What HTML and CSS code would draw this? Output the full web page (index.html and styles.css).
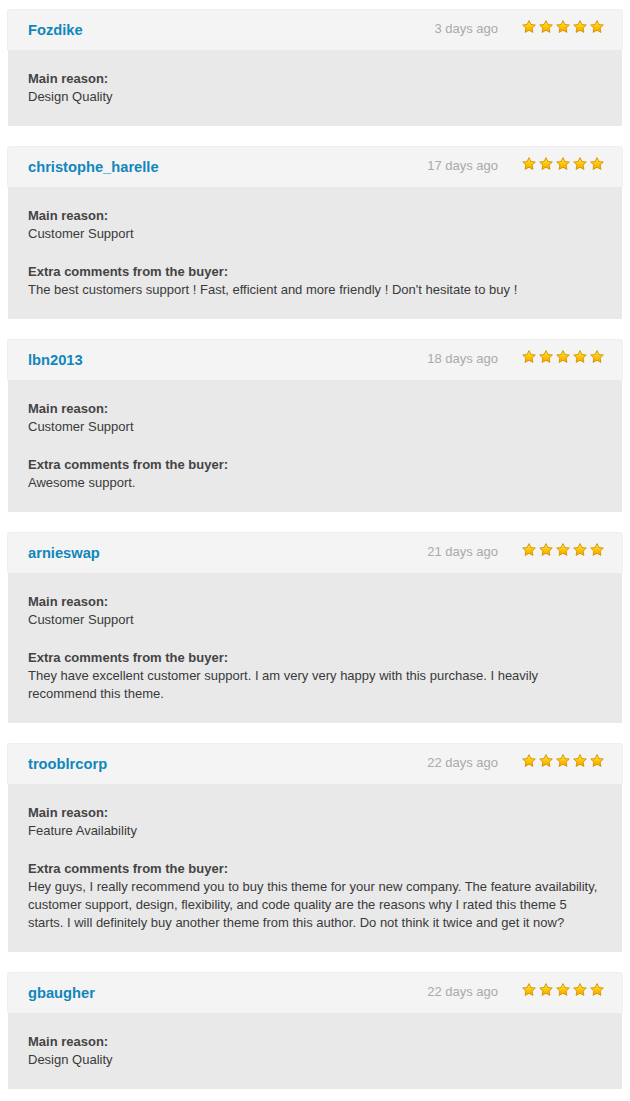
FILE: index.html
```html
<!DOCTYPE html>
<html>
<head>
<meta charset="utf-8">
<link rel="stylesheet" href="styles.css">
</head>
<body>
<svg width="0" height="0" class="defs">
  <defs>
    <linearGradient id="sg" x1="0" y1="0" x2="0" y2="1">
      <stop offset="0" stop-color="#ffe45c"/>
      <stop offset="0.55" stop-color="#ffc400"/>
      <stop offset="1" stop-color="#f7a600"/>
    </linearGradient>
    <symbol id="star" viewBox="0 0 14 13">
      <polygon points="7,0.6 8.9,4.5 13.3,5 10.1,8 10.9,12.4 7,10.2 3.1,12.4 3.9,8 0.7,5 5.1,4.5" fill="url(#sg)" stroke="#d39200" stroke-width="0.9" stroke-linejoin="round"/>
    </symbol>
  </defs>
</svg>
<div class="reviews">

  <div class="review">
    <div class="review-head">
      <span class="user">Fozdike</span>
      <span class="date">3 days ago</span>
      <span class="stars"><svg><use href="#star"/></svg><svg><use href="#star"/></svg><svg><use href="#star"/></svg><svg><use href="#star"/></svg><svg><use href="#star"/></svg></span>
    </div>
    <div class="review-body">
      <div class="label">Main reason:</div>
      <div class="text">Design Quality</div>
    </div>
  </div>

  <div class="review">
    <div class="review-head">
      <span class="user">christophe_harelle</span>
      <span class="date">17 days ago</span>
      <span class="stars"><svg><use href="#star"/></svg><svg><use href="#star"/></svg><svg><use href="#star"/></svg><svg><use href="#star"/></svg><svg><use href="#star"/></svg></span>
    </div>
    <div class="review-body">
      <div class="label">Main reason:</div>
      <div class="text">Customer Support</div>
      <div class="label extra">Extra comments from the buyer:</div>
      <div class="text">The best customers support ! Fast, efficient and more friendly ! Don't hesitate to buy !</div>
    </div>
  </div>

  <div class="review">
    <div class="review-head">
      <span class="user">lbn2013</span>
      <span class="date">18 days ago</span>
      <span class="stars"><svg><use href="#star"/></svg><svg><use href="#star"/></svg><svg><use href="#star"/></svg><svg><use href="#star"/></svg><svg><use href="#star"/></svg></span>
    </div>
    <div class="review-body">
      <div class="label">Main reason:</div>
      <div class="text">Customer Support</div>
      <div class="label extra">Extra comments from the buyer:</div>
      <div class="text">Awesome support.</div>
    </div>
  </div>

  <div class="review">
    <div class="review-head">
      <span class="user">arnieswap</span>
      <span class="date">21 days ago</span>
      <span class="stars"><svg><use href="#star"/></svg><svg><use href="#star"/></svg><svg><use href="#star"/></svg><svg><use href="#star"/></svg><svg><use href="#star"/></svg></span>
    </div>
    <div class="review-body">
      <div class="label">Main reason:</div>
      <div class="text">Customer Support</div>
      <div class="label extra">Extra comments from the buyer:</div>
      <div class="text">They have excellent customer support. I am very very happy with this purchase. I heavily recommend this theme.</div>
    </div>
  </div>

  <div class="review">
    <div class="review-head">
      <span class="user">trooblrcorp</span>
      <span class="date">22 days ago</span>
      <span class="stars"><svg><use href="#star"/></svg><svg><use href="#star"/></svg><svg><use href="#star"/></svg><svg><use href="#star"/></svg><svg><use href="#star"/></svg></span>
    </div>
    <div class="review-body">
      <div class="label">Main reason:</div>
      <div class="text">Feature Availability</div>
      <div class="label extra">Extra comments from the buyer:</div>
      <div class="text">Hey guys, I really recommend you to buy this theme for your new company. The feature availability, customer support, design, flexibility, and code quality are the reasons why I rated this theme 5 starts. I will definitely buy another theme from this author. Do not think it twice and get it now?</div>
    </div>
  </div>

  <div class="review">
    <div class="review-head">
      <span class="user">gbaugher</span>
      <span class="date">22 days ago</span>
      <span class="stars"><svg><use href="#star"/></svg><svg><use href="#star"/></svg><svg><use href="#star"/></svg><svg><use href="#star"/></svg><svg><use href="#star"/></svg></span>
    </div>
    <div class="review-body">
      <div class="label">Main reason:</div>
      <div class="text">Design Quality</div>
    </div>
  </div>

</div>
</body>
</html>
```

FILE: styles.css
```css
html, body {
  margin: 0;
  padding: 0;
  background: #ffffff;
}

body {
  font-family: "Liberation Sans", Arial, sans-serif;
  font-size: 13px;
  color: #444;
}

.defs {
  position: absolute;
  width: 0;
  height: 0;
}

.reviews {
  display: flex;
  flex-direction: column;
  gap: 20px;
  padding: 9px 8px 0 8px;
}

.review-head {
  display: flex;
  align-items: center;
  height: 41px;
  box-sizing: border-box;
  margin: 0 -1px;
  padding: 0 18px 3px 20px;
  background: #f4f4f4;
  border: 1px solid #efefef;
  border-bottom: none;
  border-radius: 3px 3px 0 0;
}

.user {
  flex: 1;
  font-size: 14.7px;
  font-weight: bold;
  color: #1087bb;
  padding-top: 2px;
}

.date {
  color: #aaaaaa;
  font-size: 13px;
  margin-right: 24px;
}

.stars {
  display: flex;
  gap: 3px;
  margin-top: -4px;
}

.stars svg {
  width: 14px;
  height: 13px;
  display: block;
}

.review-body {
  background: #e9e9e9;
  padding: 20px 20px 20px 20px;
  line-height: 18px;
}

.label {
  font-weight: bold;
  color: #444;
}

.label.extra {
  margin-top: 20px;
}

.text {
  color: #3a3a3a;
}
```
